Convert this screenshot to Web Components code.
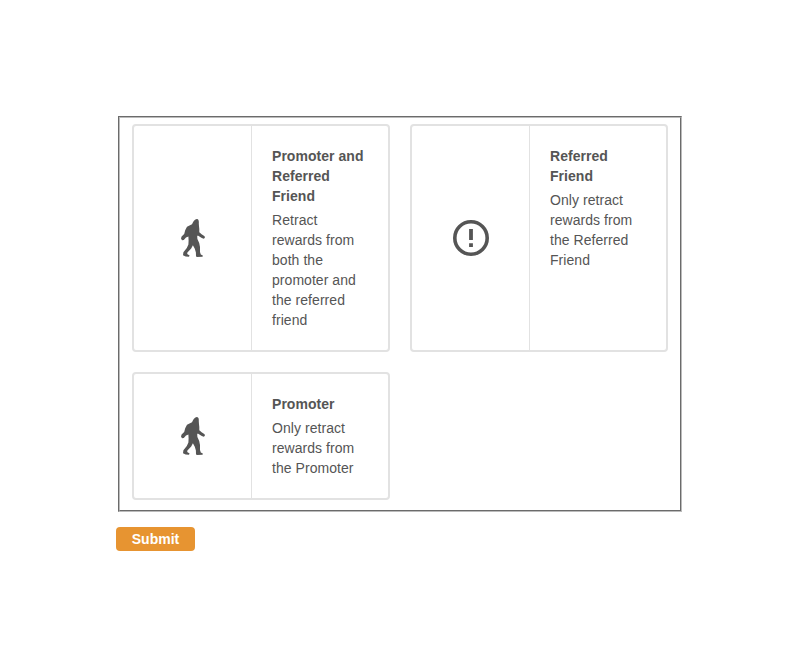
<!DOCTYPE html>
<html lang="en">
<head>
<meta charset="utf-8">
<title>Retract rewards</title>
<style>
body { margin: 0; background: #fff; color: #555; font: 14px/20px "Liberation Sans", Arial, sans-serif; }
</style>
</head>
<body>
<retract-form>
  <choice-card icon="walker" heading="Promoter and Referred Friend">Retract rewards from both the promoter and the referred friend</choice-card>
  <choice-card icon="alert" heading="Referred Friend">Only retract rewards from the Referred Friend</choice-card>
  <choice-card icon="walker" heading="Promoter">Only retract rewards from the Promoter</choice-card>
  <submit-button slot="action">Submit</submit-button>
</retract-form>
<script>
const icons = {
  walker: '<svg width="26" height="40" viewBox="0 0 26 40"><path fill="#555" d="M13 4.2C13.8 2.4 15.6 1 17 1 18.6 1.2 19 3 18.8 5.4L19 8.2 19.3 11 19.3 14.2 21.6 16.2 24.6 18.3 24.9 19.7 23.8 20.8 21.8 20 17.8 17.6 17.2 18.2 17.4 21 19.2 25 20 29 20 34 20.8 36.4 22.8 37.4 22.6 38.8 16.8 39 16 38.2 15.9 34.6 14.8 30.8 12.9 27.2 11.2 30.6 7.4 34.4 7.2 36 9.6 37.4 9 38.7 5.6 38.4 3 37.3 3.4 34.2 6.8 30 8.4 26.6 8.6 22.4 8.4 18.4 6 19.4 3.8 21.9 2 22.2 1 20.4 1.6 18.4 4.2 16 5.2 12.2 7 8.8 10 7.2 12 6.2Z"/></svg>',
  alert: '<svg width="36" height="36" viewBox="0 0 36 36"><circle cx="18" cy="18" r="16.2" fill="none" stroke="#555" stroke-width="3.6"/><path fill="#555" d="M16.1 9.1h3.8v10.9h-3.8zM16.1 23.3h3.8V27h-3.8z"/></svg>'
};

class RetractForm extends HTMLElement {
  constructor() {
    super();
    this.attachShadow({ mode: 'open' }).innerHTML = `
      <style>
        :host { display: block; box-sizing: border-box; width: 568px; margin-left: 116px; padding-top: 116px; }
        .frame { margin: 0 2px; border: 1px solid; border-color: #6b6b6b #bbb #bbb #6b6b6b; }
        .grid { display: grid; grid-template-columns: 258px 258px; gap: 20px; padding: 6px 12px 10px; border: 1px solid; border-color: #bbb #6b6b6b #6b6b6b #bbb; }
        .action { display: flex; padding-top: 15px; }
      </style>
      <div class="frame"><div class="grid"><slot></slot></div></div>
      <div class="action"><slot name="action"></slot></div>`;
  }
}

class ChoiceCard extends HTMLElement {
  constructor() {
    super();
    this.attachShadow({ mode: 'open' }).innerHTML = `
      <style>
        :host { display: flex; box-sizing: border-box; border: 2px solid #e2e2e2; border-radius: 4px; }
        .icon { box-sizing: border-box; width: 118px; flex: none; display: flex; align-items: center; justify-content: center; border-right: 1px solid #e2e2e2; }
        svg { display: block; }
        .text { flex: 1; min-width: 0; padding: 20px; }
        h3 { margin: 0 0 4px; font-size: 14px; line-height: 20px; font-weight: bold; letter-spacing: .04px; }
        p { margin: 0; letter-spacing: .05px; }
      </style>
      <div class="icon"></div>
      <div class="text"><h3></h3><p><slot></slot></p></div>`;
  }
  connectedCallback() {
    this.shadowRoot.querySelector('.icon').innerHTML = icons[this.getAttribute('icon')];
    this.shadowRoot.querySelector('h3').textContent = this.getAttribute('heading');
  }
}

class SubmitButton extends HTMLElement {
  constructor() {
    super();
    this.attachShadow({ mode: 'open' }).innerHTML = `
      <style>
        :host { display: block; }
        button { display: block; width: 79px; height: 24px; margin: 0; padding: 0; border: 0; border-radius: 4px; background: #e79431; color: #fff; font: bold 14px/24px "Liberation Sans", Arial, sans-serif; text-align: center; }
      </style>
      <button type="button"><slot></slot></button>`;
  }
}

customElements.define('retract-form', RetractForm);
customElements.define('choice-card', ChoiceCard);
customElements.define('submit-button', SubmitButton);
</script>
</body>
</html>
